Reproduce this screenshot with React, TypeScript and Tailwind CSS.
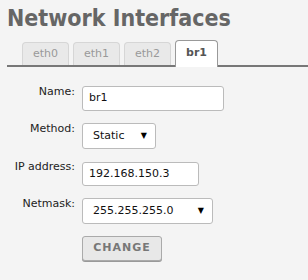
const tabs = ["eth0", "eth1", "eth2", "br1"];

function Row({ label, children }: { label: string; children: React.ReactNode }) {
  return (
    <>
      <div className="text-right text-[11px] leading-[11px] text-[#222]">{label}</div>
      <div>{children}</div>
    </>
  );
}

function SelectBox({ value, width }: { value: string; width: string }) {
  return (
    <div
      className={`${width} flex h-[26px] items-center justify-between rounded-[3px] border border-[#bbb] bg-white pl-[10px] pr-[8px] text-[11px] text-[#111]`}
    >
      <span>{value}</span>
      <span className="text-[8px] text-black">▼</span>
    </div>
  );
}

export default function App() {
  return (
    <div
      className="h-[280px] w-[308px] overflow-hidden bg-[#f4f4f4]"
      style={{ fontFamily: '"DejaVu Sans", Verdana, sans-serif' }}
    >
      <h1
        className="pl-[7px] pt-[7px] text-[23px] font-bold leading-[23px] text-[#666]"
        style={{ fontFamily: '"DejaVu Sans Condensed", "DejaVu Sans", sans-serif', fontStretch: "condensed" }}
      >
        Network Interfaces
      </h1>

      <div className="ml-[7px] mt-[11px] flex h-[26px] items-end gap-[4px] border-b-2 border-[#777] pl-[15px]">
        {tabs.map((t) =>
          t === "br1" ? (
            <div
              key={t}
              className="-mb-[2px] flex h-[27px] w-[43px] items-center justify-center rounded-t-[4px] border border-b-0 border-[#999] bg-white pb-[2px] text-[11px] font-bold text-[#555]"
            >
              {t}
            </div>
          ) : (
            <div
              key={t}
              className="flex h-[23px] w-[47px] items-center justify-center rounded-t-[4px] border border-b-0 border-[#d6d6d6] bg-[#e9e9e9] text-[11px] text-[#999]"
            >
              {t}
            </div>
          )
        )}
      </div>

      <div className="mt-[19px] grid grid-cols-[75px_auto] items-start gap-x-[7px] gap-y-[12px]">
        <Row label="Name:">
          <div className="flex h-[25px] w-[142px] items-center rounded-[3px] border border-[#bbb] bg-white pl-[6px] text-[11px] text-[#111]">
            br1
          </div>
        </Row>
        <Row label="Method:">
          <SelectBox value="Static" width="w-[74px]" />
        </Row>
        <Row label="IP address:">
          <div className="mt-[1px] flex h-[24px] w-[117px] items-center rounded-[3px] border border-[#bbb] bg-white pl-[6px] text-[11px] text-[#111]">
            192.168.150.3
          </div>
        </Row>
        <Row label="Netmask:">
          <SelectBox value="255.255.255.0" width="w-[131px]" />
        </Row>
        <div />
        <div>
          <button className="flex h-[25px] w-[80px] items-center justify-center rounded-[3px] border border-[#aaa] bg-[#e8e8e8] text-[11px] font-bold tracking-[1px] text-[#777] shadow-[0_1px_0_#999]">
            CHANGE
          </button>
        </div>
      </div>
    </div>
  );
}
